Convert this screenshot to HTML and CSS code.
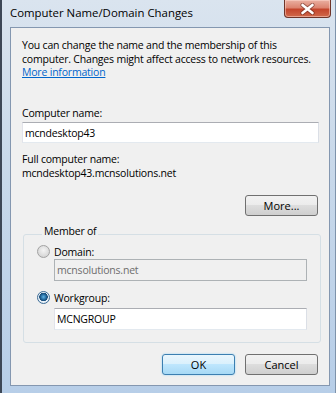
FILE: index.html
```html
<!DOCTYPE html>
<html lang="en">
<head>
  <meta charset="UTF-8">
  <meta name="viewport" content="width=device-width, initial-scale=1.0">
  <title>Computer Name/Domain Changes</title>
  <link rel="stylesheet" href="styles.css">
</head>
<body>
  <div class="window">
    <div class="titlebar">
      <span class="title">Computer Name/Domain Changes</span>
      <button class="close" title="Close">
        <svg width="15" height="12" viewBox="0 0 15 12">
          <path d="M2.5 2 L12.5 10 M12.5 2 L2.5 10" stroke="#5a2018" stroke-width="4.2" stroke-linecap="round" opacity="0.55"/>
          <path d="M2.5 2 L12.5 10 M12.5 2 L2.5 10" stroke="#fff" stroke-width="2.6" stroke-linecap="round"/>
        </svg>
      </button>
    </div>

    <div class="client">
      <p class="intro">You can change the name and the membership of this<br>computer. Changes might affect access to network resources.<br><a href="#">More information</a></p>

      <label class="field-label" for="cname">Computer name:</label>
      <input type="text" id="cname" class="textbox" value="mcndesktop43">

      <p class="full-label">Full computer name:</p>
      <p class="full-name">mcndesktop43.mcnsolutions.net</p>

      <div class="more-row">
        <button class="btn">More...</button>
      </div>

      <fieldset class="group">
        <legend>Member of</legend>
        <label class="radio"><span class="radio-dot"></span>Domain:</label>
        <input type="text" class="textbox" value="mcnsolutions.net" disabled>
        <label class="radio radio-wg"><span class="radio-dot checked"></span>Workgroup:</label>
        <input type="text" class="textbox" value="MCNGROUP">
      </fieldset>

      <div class="actions">
        <button class="btn btn-default">OK</button>
        <button class="btn">Cancel</button>
      </div>
    </div>
  </div>
</body>
</html>
```

FILE: styles.css
```css
* { box-sizing: border-box; }
body { margin: 0; font-family: "Open Sans", "Noto Sans", sans-serif; font-size: 10.5px; letter-spacing: -0.2px; color: #000; }

.window { width: 336px; height: 393px; padding: 0 5px 7px 8px; background: linear-gradient(#dae4ef, #c9d9ea 40%, #b7cee8); border-left: 2px solid #3d4756; border-right: 1px solid #7e93ab; }
.titlebar { height: 27px; display: flex; justify-content: space-between; align-items: flex-start; }
.title { padding-top: 5px; font-size: 11.4px; letter-spacing: 0; line-height: 16px; }
.close { width: 47px; height: 18px; margin-right: -1px; padding: 0; display: flex; align-items: center; justify-content: center; border: 1px solid #6e3429; border-top: none; border-radius: 0 0 4px 4px; background: linear-gradient(#eab0a2, #dc8470 45%, #c4452c 55%, #d0694b); box-shadow: inset 0 0 0 1px rgba(255, 220, 210, 0.5); }

.client { height: 359px; padding: 11px 10px 0 11px; background: #f0f0f0; border: 1px solid #8497b0; }
.client p { margin: 0; }
.intro { line-height: 13.5px; }
.intro a { color: #0066cc; }

.field-label { display: block; margin-top: 27px; line-height: 13.5px; }
.textbox { display: block; width: 100%; height: 21px; margin: 2px 0 0; padding: 0 2px; font: inherit; letter-spacing: inherit; color: #000; background: #fff; border: 1px solid #abadb3; border-color: #abadb3 #dbdfe6 #e3e9ef #e2e3ea; }
.full-label { margin-top: 10px !important; line-height: 13.5px; }
.full-name { line-height: 13.5px; }

.more-row { display: flex; justify-content: flex-end; margin-top: 15px; }
.btn { width: 73px; height: 21px; padding: 0; font: inherit; font-size: 11px; color: #000; border: 1px solid #707070; border-radius: 3px; background: linear-gradient(#f2f2f2, #ebebeb 50%, #dddddd 50%, #cfcfcf); }
.more-row .btn { margin-right: 1px; }

.group { margin: 9px 1px 0; padding: 0 13px 12px 13px; border: 1px solid #d5dfe5; border-radius: 3px; }
.group legend { padding: 0 2px 6px; margin-left: 5px; line-height: 13.5px; }
.radio { display: flex; align-items: center; height: 14px; }
.radio-dot { flex-shrink: 0; width: 13px; height: 13px; margin-right: 4px; border-radius: 50%; border: 1px solid #a2a2a2; background: radial-gradient(circle at 50% 40%, #f4f4f4, #d8d8d8 70%, #c4c4c4); }
.radio-dot.checked { border-color: #3c6c96; background: radial-gradient(circle at 50% 45%, #5fb4e6 0, #1d5f93 3px, #1a4c78 4px, #eaf2f9 4.5px, #d3dee8 100%); }
.group .textbox { margin: 0 0 0 17px; width: 253px; height: 22px; }
.group .textbox:disabled { color: #6d6d6d; background: #f0f0f0; border-color: #adb2b5; }
.radio-wg { margin-top: 10px; }
.group .radio-wg + .textbox { margin-top: 3px; }

.actions { display: flex; justify-content: flex-end; gap: 9px; margin-top: 11px; }
.actions .btn { margin-right: 1px; }
.btn-default { border-color: #3c7fb1; background: linear-gradient(#eaf6fd, #d9f0fc 50%, #bee6fd 50%, #a7d9f5); box-shadow: 0 0 2px #8ed0f5; }
```
